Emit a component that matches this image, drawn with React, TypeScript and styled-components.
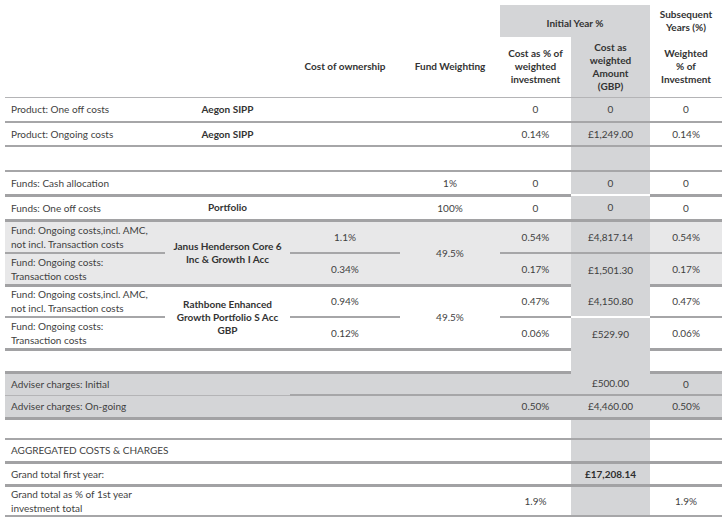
import React from "react";
import styled, { createGlobalStyle } from "styled-components";

const GlobalStyle = createGlobalStyle`
  html, body { margin: 0; padding: 0; background: #ffffff; }
  body { font-family: Lato, "Open Sans", "Liberation Sans", sans-serif; color: #3f3f3f; }
`;

type Rule = "thin" | "mid" | "thick" | "white" | "none";
type Tone = "white" | "light" | "grey";

const GREY = "#d4d5d7";
const LIGHT = "#e8e8e9";
const LINE = "#a6a6a8";

const ruleCss = (r: Rule = "none") => {
  switch (r) {
    case "thin":
      return `1px solid #b4b4b6`;
    case "mid":
      return `2px solid ${LINE}`;
    case "thick":
      return `3px solid #a2a2a4`;
    case "white":
      return `2px solid #ffffff`;
    default:
      return "none";
  }
};

const toneCss = (t: Tone = "white") =>
  t === "grey" ? GREY : t === "light" ? LIGHT : "transparent";

const Page = styled.div`
  padding: 5px 0 0 5px;
`;

const Sheet = styled.table`
  width: 717px;
  table-layout: fixed;
  border-collapse: collapse;
  font-size: 10px;
`;

const Col = styled.col<{ $w: number }>`
  width: ${(p) => p.$w}px;
`;

const Row = styled.tr<{ $h: number; $tone?: Tone }>`
  height: ${(p) => p.$h}px;
  background: ${(p) => toneCss(p.$tone)};
`;

const HeadCell = styled.th<{ $fill?: boolean; $drop?: number }>`
  padding: ${(p) => p.$drop ?? 0}px 2px 0;
  font-weight: 700;
  text-align: center;
  vertical-align: middle;
  line-height: 13px;
  color: #333333;
  background: ${(p) => (p.$fill ? GREY : "transparent")};
`;

const SubHead = styled(HeadCell)<{ $rule?: Rule }>`
  border-bottom: ${(p) => ruleCss(p.$rule)};
`;

const Label = styled.td<{ $rule?: Rule }>`
  padding: 0 6px;
  text-align: left;
  vertical-align: middle;
  line-height: 14px;
  white-space: nowrap;
  border-bottom: ${(p) => ruleCss(p.$rule)};
`;

const Name = styled.td<{ $rule?: Rule }>`
  padding: 0 4px;
  text-align: center;
  vertical-align: middle;
  font-weight: 700;
  line-height: 13px;
  color: #333333;
  border-bottom: ${(p) => ruleCss(p.$rule)};
`;

const Value = styled.td<{ $rule?: Rule; $bold?: boolean }>`
  padding: 0 2px;
  text-align: center;
  vertical-align: middle;
  line-height: 14px;
  font-weight: ${(p) => (p.$bold ? 700 : 400)};
  color: ${(p) => (p.$bold ? "#2e2e2e" : "inherit")};
  border-bottom: ${(p) => ruleCss(p.$rule)};
`;

const Amount = styled(Value)`
  background: ${GREY};
`;

type Cells = {
  label?: React.ReactNode;
  name?: React.ReactNode;
  owner?: string;
  weight?: string;
  pct?: string;
  amount?: string;
  later?: string;
};

type SimpleProps = Cells & {
  h: number;
  rule: Rule;
  labelRule?: Rule;
  amountRule?: Rule;
  tone?: Tone;
  boldAmount?: boolean;
};

const SimpleRow = ({ h, rule, labelRule, amountRule, tone, boldAmount, ...c }: SimpleProps) => (
  <Row $h={h} $tone={tone}>
    <Label $rule={labelRule ?? rule}>{c.label}</Label>
    <Name $rule={labelRule ?? rule}>{c.name}</Name>
    <Value $rule={rule}>{c.owner}</Value>
    <Value $rule={rule}>{c.weight}</Value>
    <Value $rule={rule}>{c.pct}</Value>
    <Amount $rule={amountRule ?? rule} $bold={boldAmount}>
      {c.amount}
    </Amount>
    <Value $rule={rule}>{c.later}</Value>
  </Row>
);

type Fund = {
  name: React.ReactNode;
  weight: string;
  tone: Tone;
  midAmountRule: Rule;
  endAmountRule: Rule;
  lines: { label: React.ReactNode; owner: string; pct: string; amount: string; later: string; h: number }[];
};

const FundRows = ({ fund }: { fund: Fund }) => {
  const [a, b] = fund.lines;
  return (
    <>
      <Row $h={a.h} $tone={fund.tone}>
        <Label $rule="mid">{a.label}</Label>
        <Name rowSpan={2} $rule="thick">
          {fund.name}
        </Name>
        <Value $rule="mid">{a.owner}</Value>
        <Value rowSpan={2} $rule="thick">
          {fund.weight}
        </Value>
        <Value $rule="mid">{a.pct}</Value>
        <Amount $rule={fund.midAmountRule}>{a.amount}</Amount>
        <Value $rule="mid">{a.later}</Value>
      </Row>
      <Row $h={b.h} $tone={fund.tone}>
        <Label $rule="thick">{b.label}</Label>
        <Value $rule="thick">{b.owner}</Value>
        <Value $rule="thick">{b.pct}</Value>
        <Amount $rule={fund.endAmountRule}>{b.amount}</Amount>
        <Value $rule="thick">{b.later}</Value>
      </Row>
    </>
  );
};

const ongoingLabel = (
  <>
    Fund: Ongoing costs,incl. AMC,
    <br />
    not incl. Transaction costs
  </>
);

const transactionLabel = (
  <>
    Fund: Ongoing costs:
    <br />
    Transaction costs
  </>
);

const funds: Fund[] = [
  {
    name: (
      <>
        Janus Henderson Core 6
        <br />
        Inc &amp; Growth I Acc
      </>
    ),
    weight: "49.5%",
    tone: "light",
    midAmountRule: "mid",
    endAmountRule: "none",
    lines: [
      { label: ongoingLabel, owner: "1.1%", pct: "0.54%", amount: "£4,817.14", later: "0.54%", h: 33 },
      { label: transactionLabel, owner: "0.34%", pct: "0.17%", amount: "£1,501.30", later: "0.17%", h: 32 },
    ],
  },
  {
    name: (
      <>
        Rathbone Enhanced
        <br />
        Growth Portfolio S Acc
        <br />
        GBP
      </>
    ),
    weight: "49.5%",
    tone: "white",
    midAmountRule: "white",
    endAmountRule: "none",
    lines: [
      { label: ongoingLabel, owner: "0.94%", pct: "0.47%", amount: "£4,150.80", later: "0.47%", h: 32 },
      { label: transactionLabel, owner: "0.12%", pct: "0.06%", amount: "£529.90", later: "0.06%", h: 32 },
    ],
  },
];

export default function App() {
  return (
    <Page>
      <GlobalStyle />
      <Sheet>
        <colgroup>
          <Col $w={160} />
          <Col $w={125} />
          <Col $w={110} />
          <Col $w={100} />
          <Col $w={71} />
          <Col $w={79} />
          <Col $w={72} />
        </colgroup>
        <thead>
          <Row $h={32}>
            <HeadCell colSpan={4} />
            <HeadCell colSpan={2} $fill $drop={5}>
              Initial Year %
            </HeadCell>
            <HeadCell>
              Subsequent
              <br />
              Years (%)
            </HeadCell>
          </Row>
          <Row $h={60}>
            <SubHead $rule="thin" />
            <SubHead $rule="thin" />
            <SubHead $rule="thin">Cost of ownership</SubHead>
            <SubHead $rule="thin">Fund Weighting</SubHead>
            <SubHead $rule="thin">
              Cost as % of
              <br />
              weighted
              <br />
              investment
            </SubHead>
            <SubHead $rule="thin" $fill>
              Cost as
              <br />
              weighted
              <br />
              Amount
              <br />
              (GBP)
            </SubHead>
            <SubHead $rule="thin">
              Weighted
              <br />
              % of
              <br />
              Investment
            </SubHead>
          </Row>
        </thead>
        <tbody>
          <SimpleRow h={25} rule="mid" label="Product: One off costs" name="Aegon SIPP" pct="0" amount="0" later="0" />
          <SimpleRow
            h={24}
            rule="mid"
            label="Product: Ongoing costs"
            name="Aegon SIPP"
            pct="0.14%"
            amount="£1,249.00"
            later="0.14%"
          />
          <SimpleRow h={25} rule="mid" />
          <SimpleRow
            h={24}
            rule="thick"
            amountRule="white"
            label="Funds: Cash allocation"
            weight="1%"
            pct="0"
            amount="0"
            later="0"
          />
          <SimpleRow
            h={25}
            rule="thick"
            label="Funds: One off costs"
            name="Portfolio"
            weight="100%"
            pct="0"
            amount="0"
            later="0"
          />
          {funds.map((f, i) => (
            <FundRows key={i} fund={f} />
          ))}
          <SimpleRow h={23} rule="thick" amountRule="none" />
          <SimpleRow
            h={23}
            rule="mid"
            labelRule="thin"
            tone="grey"
            label="Adviser charges: Initial"
            amount="£500.00"
            later="0"
          />
          <SimpleRow
            h={23}
            rule="thick"
            tone="grey"
            label="Adviser charges: On-going"
            pct="0.50%"
            amount="£4,460.00"
            later="0.50%"
          />
          <SimpleRow h={21} rule="mid" />
          <SimpleRow h={23} rule="thick" label="AGGREGATED COSTS & CHARGES" />
          <SimpleRow h={23} rule="thick" label="Grand total first year:" amount="£17,208.14" boldAmount />
          <SimpleRow
            h={31}
            rule="mid"
            label={
              <>
                Grand total as % of 1st year
                <br />
                investment total
              </>
            }
            pct="1.9%"
            later="1.9%"
          />
        </tbody>
      </Sheet>
    </Page>
  );
}
